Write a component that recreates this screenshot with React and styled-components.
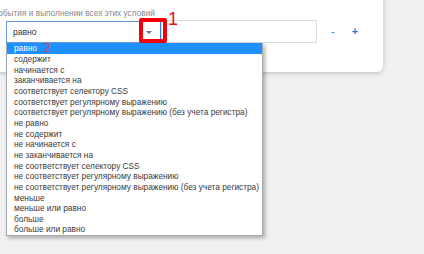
import styled, { createGlobalStyle } from "styled-components";

const GlobalStyle = createGlobalStyle`
  html, body {
    margin: 0;
    padding: 0;
    background: #eff0f2;
  }
  body {
    font-family: "Liberation Sans", Arial, sans-serif;
  }
`;

const Page = styled.div`
  position: relative;
  width: 424px;
  height: 254px;
  overflow: hidden;
`;

const Card = styled.div`
  margin-top: -40px;
  margin-left: -40px;
  width: 423px;
  padding: 47px 0 29px 46px;
  box-sizing: border-box;
  background: #fff;
  border-radius: 0 0 6px 0;
  box-shadow: 0 1px 4px rgba(0, 0, 0, 0.22);
  overflow: hidden;
`;

const Caption = styled.div`
  margin-left: -12px;
  height: 13px;
  line-height: 13px;
  font-size: 8.3px;
  color: #8a8a8a;
  white-space: nowrap;
`;

const Row = styled.div`
  display: flex;
  align-items: flex-start;
`;

const SelectBox = styled.div`
  display: flex;
  align-items: center;
  margin-top: 1px;
  width: 155px;
  height: 22px;
  box-sizing: border-box;
  border: 1px solid #6a9be0;
  border-right-color: #3d7fe0;
  padding-left: 6px;
  font-size: 8.6px;
  color: #333;
`;

const SelectValue = styled.span`
  flex: 1;
`;

const Arrow = styled.span`
  width: 0;
  height: 0;
  margin-right: 8px;
  border-left: 3px solid transparent;
  border-right: 3px solid transparent;
  border-top: 3px solid #4f7ab0;
`;

const TextBox = styled.div`
  width: 156px;
  height: 23px;
  box-sizing: border-box;
  border: 1px solid #dcdcdc;
`;

const Step = styled.button`
  margin-left: ${(p) => p.$gap}px;
  padding: 0;
  border: none;
  background: none;
  font-family: "Liberation Sans", Arial, sans-serif;
  font-size: 11px;
  font-weight: ${(p) => (p.$bold ? 700 : 400)};
  line-height: 23px;
  color: #2f74dc;
`;

const Highlight = styled.div`
  position: absolute;
  left: 139px;
  top: 18px;
  width: 28px;
  height: 25px;
  box-sizing: border-box;
  border: 4px solid #f3000c;
  border-radius: 2px;
`;

const Mark = styled.span`
  position: absolute;
  left: 168px;
  top: 10px;
  font-family: "Liberation Sans", Arial, sans-serif;
  font-size: 18px;
  line-height: 1;
  color: #e8101e;
`;

const List = styled.ul`
  position: absolute;
  left: 6px;
  top: 43px;
  width: 257px;
  height: 193px;
  box-sizing: border-box;
  margin: 0;
  padding: 0;
  list-style: none;
  background: #fff;
  border: 1px solid #a9a9a9;
  border-top: none;
  box-shadow: 2px 2px 4px rgba(0, 0, 0, 0.3);
`;

const Option = styled.li`
  display: flex;
  align-items: center;
  height: 10.67px;
  padding-left: 7px;
  font-size: 8.3px;
  white-space: nowrap;
  color: ${(p) => (p.$active ? "#fff" : "#3a3a3a")};
  background: ${(p) => (p.$active ? "#1e90ff" : "transparent")};
`;

const Badge = styled.span`
  margin-left: 7px;
  font-size: 12px;
  line-height: 10px;
  color: #e53950;
`;

const options = [
  "равно",
  "содержит",
  "начинается с",
  "заканчивается на",
  "соответствует селектору CSS",
  "соответствует регулярному выражению",
  "соответствует регулярному выражению (без учета регистра)",
  "не равно",
  "не содержит",
  "не начинается с",
  "не заканчивается на",
  "не соответствует селектору CSS",
  "не соответствует регулярному выражению",
  "не соответствует регулярному выражению (без учета регистра)",
  "меньше",
  "меньше или равно",
  "больше",
  "больше или равно",
];

const App = () => {
  return (
    <Page>
      <GlobalStyle />
      <Card>
        <Caption>события и выполнении всех этих условий</Caption>
        <Row>
          <SelectBox>
            <SelectValue>равно</SelectValue>
            <Arrow />
          </SelectBox>
          <TextBox />
          <Step $gap={14}>-</Step>
          <Step $gap={17} $bold>
            +
          </Step>
        </Row>
      </Card>
      <Highlight />
      <Mark>1</Mark>
      <List>
        {options.map((o, i) => (
          <Option key={o} $active={i === 0}>
            {o}
            {i === 0 && <Badge>2</Badge>}
          </Option>
        ))}
      </List>
    </Page>
  );
};

export default App;
